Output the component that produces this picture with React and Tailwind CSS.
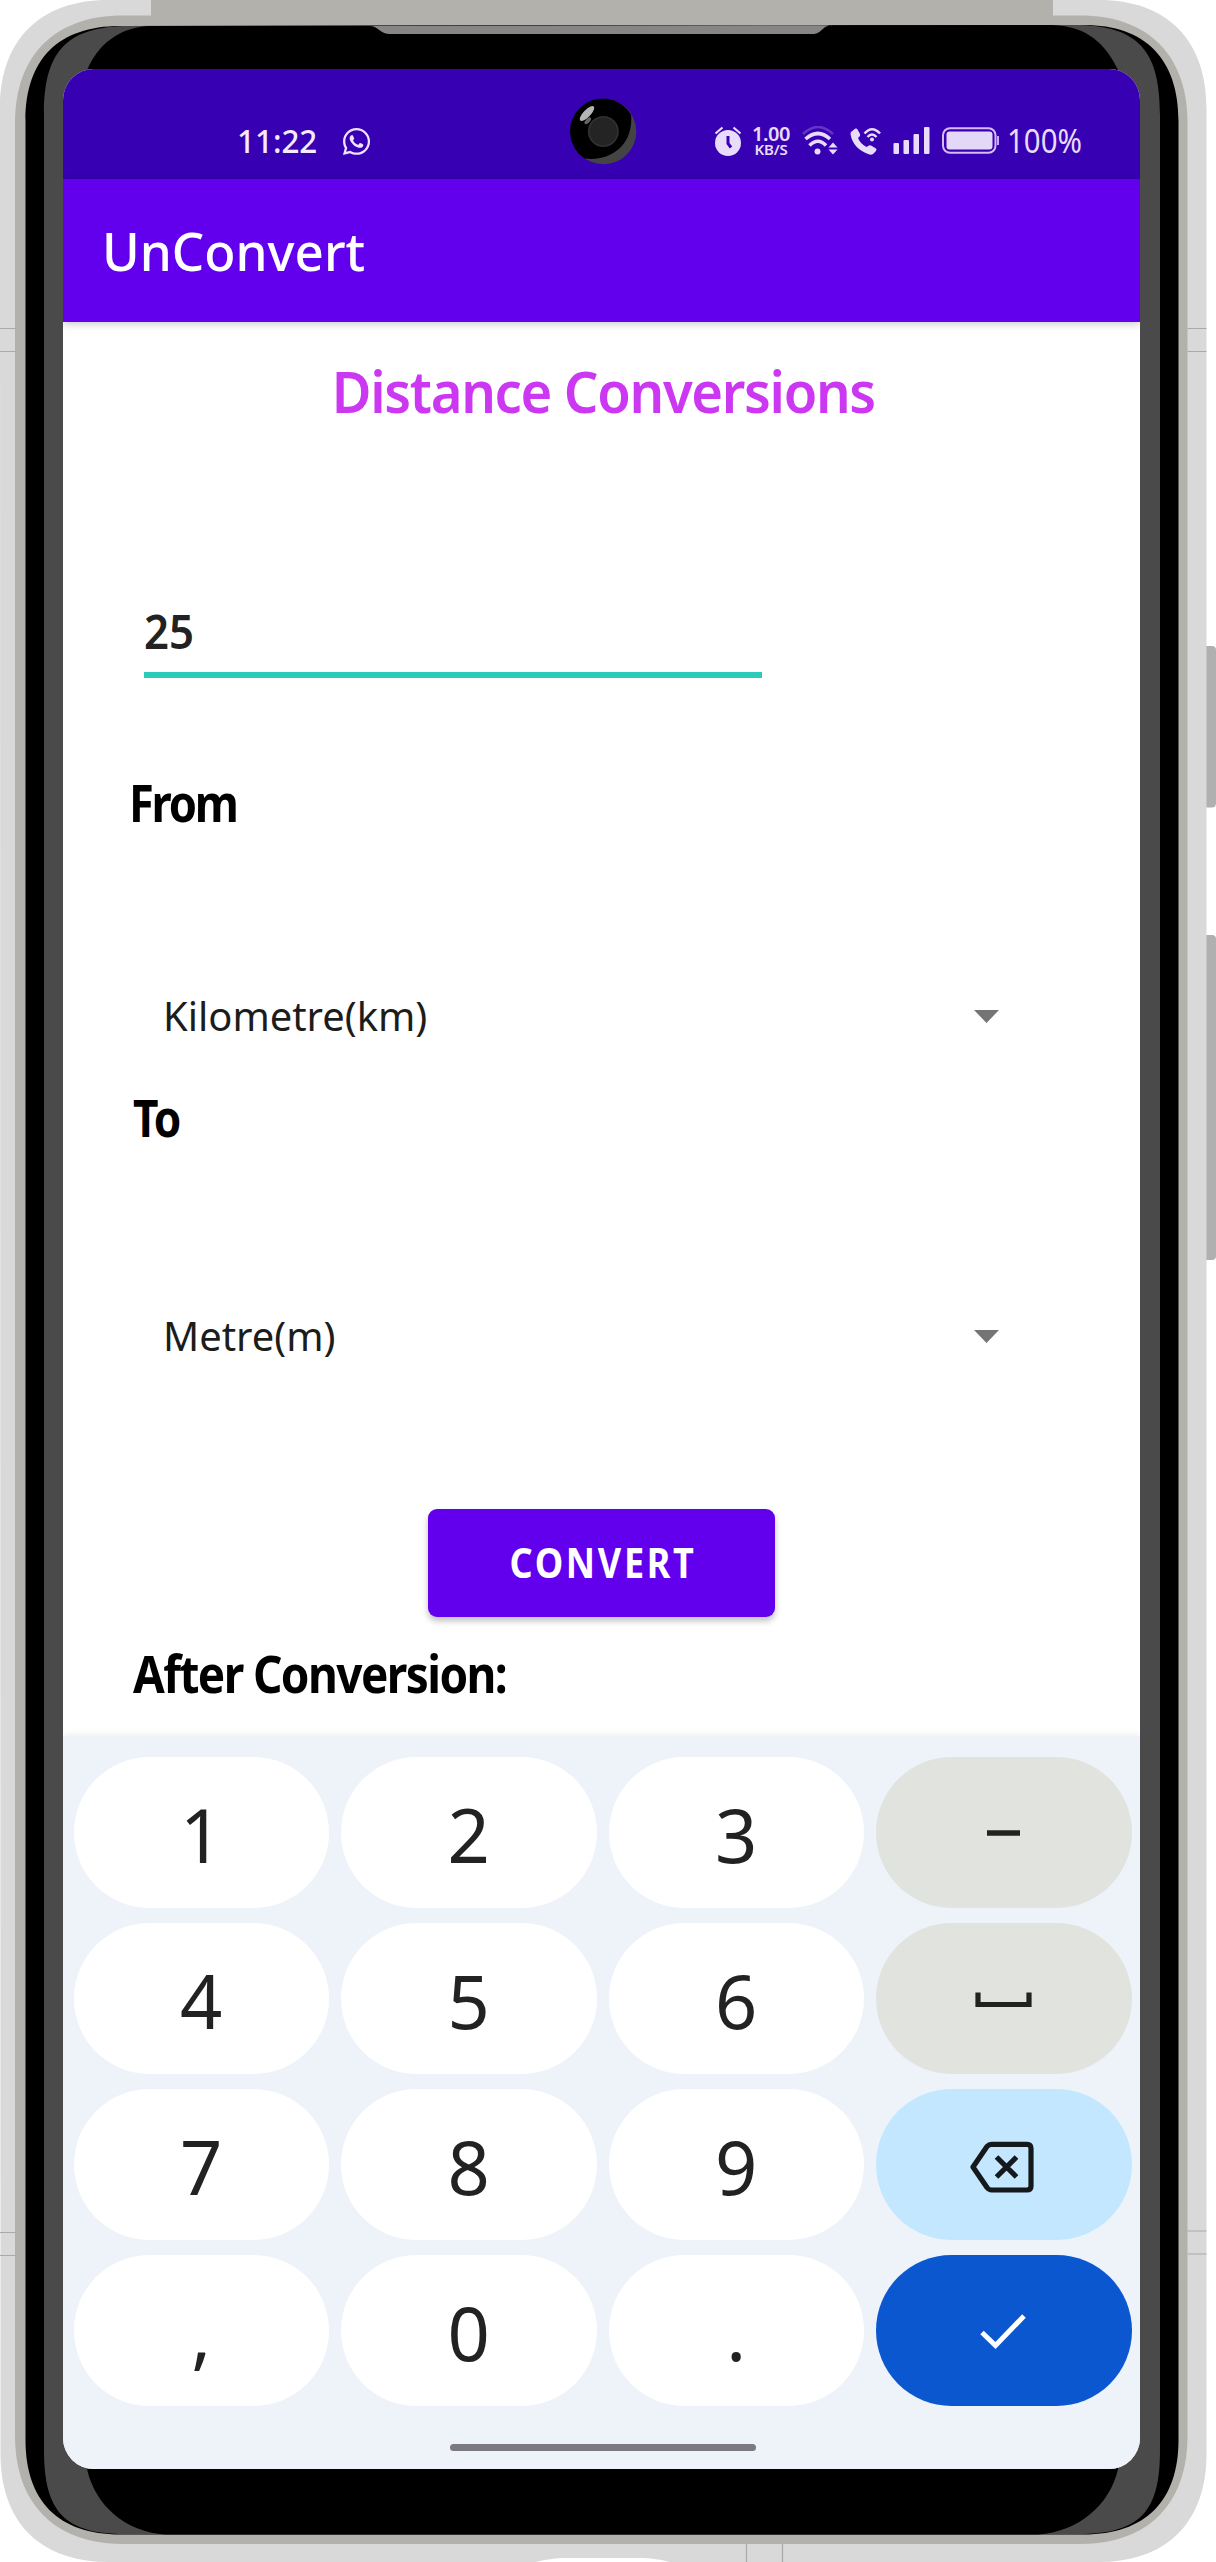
import { FaWhatsapp } from 'react-icons/fa';

function PhoneFrame() {
  return (
    <svg className="absolute inset-0" width="1216" height="2562" viewBox="0 0 1216 2562" aria-hidden="true">
      <g fill="#b0b0b0">
        <path d="M1206 646H1212Q1216 646 1216 650V803Q1216 807.500 1212 807.500H1206Z" />
        <path d="M1206 935H1212Q1216 935 1216 939V1256Q1216 1260 1212 1260H1206Z" />
      </g>
      <path fill="#d9d9d9" d="M0 108C0 40 40 0 108 0H1099C1167 0 1206.500 40 1206.500 108V2454C1206.500 2522 1167 2562 1099 2562H108C40 2562 0.500 2522 0.500 2454Z" />
      <path fill="#b2b1ac" d="M15 123C15 55 55 15.500 123 15.500H1080C1148 15.500 1187.500 55 1187.500 123V2436C1187.500 2504 1148 2544 1080 2544H123C55 2544 15 2504 15 2436Z" />
      <path fill="#b2b1ac" d="M151 0H1053V20H151Z" />
      <path fill="#000" d="M25.500 121C25.500 59 58.500 26 120 26L1084 25C1145.500 25 1178.500 59 1178.500 121V2440C1178.500 2501 1145.500 2534.500 1084 2534.500H120C58.500 2534.500 25.500 2501 25.500 2440Z" />
      <path fill="#4a4a4a" d="M44 115C44 55 63 26 130 26L1075 25C1142 25 1160 55 1160 115V2450C1160 2510 1142 2534 1078 2534H125C63 2534 44 2510 44 2450Z" />
      <path fill="#000" d="M148 26C118 28 98 45 87 70V2469C95 2505 125 2532 165 2534.500H1038C1078 2532 1110 2505 1118 2469V70C1106 45 1088 26 1052 25Z" />
      <path fill="#868686" d="M370 26C378 26 380 34 390 34H813C822 34 822 25 833 25Z" />
      <g stroke="#a9a9a9" strokeWidth="1.200">
        <path d="M0 328.500H16M0 351.500H16M1187.500 328.500H1206.500M1187.500 351.500H1206.500" />
        <path d="M0 2232.500H16M0 2255.500H16M1187.500 2231H1206.500M1187.500 2254H1206.500" />
        <path d="M746.500 2543V2562M782.500 2543V2562" />
      </g>
      <path fill="#fff" d="M536 2562C548 2559 556 2558 565 2558H640C650 2558 658 2559 670 2562Z" />
    </svg>
  );
}

function Camera() {
  return (
    <svg className="absolute left-[570px] top-[98px]" width="67" height="67" viewBox="0 0 67 67" aria-hidden="true">
      <circle cx="33.500" cy="33.500" r="32.800" fill="#444" />
      <path fill="#000" d="M61 16.500A32.800 32.800 0 1 0 14.500 60.500C38 64 64 49 61 16.500Z" />
      <circle cx="33.300" cy="33.500" r="14.600" fill="#242424" stroke="#303030" strokeWidth="1.800" />
      <ellipse cx="17" cy="15.500" rx="9.800" ry="3.600" transform="rotate(-46 17 15.500)" fill="#b5b5b5" />
      <ellipse cx="17.800" cy="22.800" rx="4.200" ry="2" transform="rotate(-46 17.800 22.800)" fill="#666" />
    </svg>
  );
}

function StatusBar() {
  return (
    <div className="flex h-[110px] shrink-0 items-start bg-[#3700b3] pt-[57px] text-[#e8dcfa]">
      <div className="ml-[174px] flex h-[30px] w-[84px] items-center">
        <span className="origin-left scale-x-[0.98] text-[32px] font-medium leading-[30px] text-[#f4ecfe]">11:22</span>
      </div>
      <FaWhatsapp className="ml-[20px]  text-[#f0e2ff]" size={31} />
      <svg className="ml-[342px]" width="28" height="30" viewBox="0 0 28 30">
        <circle cx="14" cy="17" r="13" fill="currentColor" />
        <path d="M1.500 7.500L8.500 1.500M26.500 7.500L19.500 1.500" stroke="currentColor" strokeWidth="2.200" />
        <path d="M14 10V17.500L17 21.500" stroke="#3700b3" strokeWidth="3" fill="none" />
      </svg>
      <div className="ml-[8px] flex h-[30px] w-[42px] flex-col items-center">
        <span className="text-[20px] font-semibold leading-[16px] tracking-[-0.5px]">1.00</span>
        <span className="text-[15px] font-semibold leading-[15px] tracking-[-0.2px]">KB/S</span>
      </div>
      <svg className="ml-[10px]" width="37" height="30" viewBox="0 0 37 30" fill="none" stroke="currentColor">
        <path d="M1 8Q16 -6 31 8" strokeWidth="2.500" opacity="0.25" />
        <path d="M3.500 13Q16 2 28 13" strokeWidth="3.600" />
        <path d="M7.500 19.500Q16 11 24 19.500" strokeWidth="3.600" />
        <circle cx="15.500" cy="25.500" r="3" fill="currentColor" stroke="none" />
        <path d="M26.500 21.500L31 16.500L35.500 21.500ZM26.500 23.500H35.500L31 28.500Z" fill="currentColor" stroke="none" />
      </svg>
      <svg className="ml-[11px]" width="32" height="30" viewBox="0 0 32 30" fill="none" stroke="currentColor">
        <path d="M1 6L5 2.800Q6.500 2 7.500 3.500L10 8Q10.500 9.500 9.500 10.500L8 12Q10.500 18 16.500 21L19 19.500Q20 19 21 19.500L26 22.500Q27 23.500 26 25L23 28Q21.500 29 19.500 28.500Q3 23 0.500 8Q0.500 7 1 6Z" fill="currentColor" stroke="none" />
        <path d="M14.500 7.500Q22 -1 30 7.500M17.500 11Q22 6 26.500 11" strokeWidth="2.500" />
        <circle cx="22" cy="13.500" r="2" fill="currentColor" stroke="none" />
      </svg>
      <svg className="ml-[11px]" width="38" height="30" viewBox="0 0 38 30" fill="currentColor">
        <rect x="0.500" y="17" width="5.500" height="11" rx="1" />
        <rect x="10.500" y="14" width="5.500" height="14" rx="1" />
        <rect x="20.500" y="8" width="5.500" height="20" rx="1" />
        <rect x="31" y="1" width="5.500" height="27" rx="1" />
      </svg>
      <svg className="ml-[11px]" width="59" height="30" viewBox="0 0 59 30">
        <rect x="1" y="2.200" width="52.500" height="24.600" rx="7" fill="none" stroke="#d9baf7" strokeWidth="2" />
        <rect x="4.500" y="5.500" width="46" height="18" rx="3" fill="#e3d8f7" />
        <path d="M56 10V19" stroke="#c9a8ef" strokeWidth="2" />
      </svg>
      <div className="ml-[6px] flex h-[30px] items-center">
        <span className="origin-left scale-x-[0.92] text-[32px] leading-[30px]">100%</span>
      </div>
    </div>
  );
}

function Label({ className, children }) {
  return (
    <div className={`flex h-[72px] origin-left items-center ${className}`}>
      <span className="whitespace-nowrap text-[52px] font-bold leading-[72px] text-black">{children}</span>
    </div>
  );
}

function Spinner({ className, children }) {
  return (
    <div className={`ml-[100px] flex h-20 w-[836px] items-center justify-between ${className}`}>
      <span className="origin-left scale-x-[0.985] text-[40.5px] leading-[80px] text-[#1c1c1c]">{children}</span>
      <svg width="25" height="13" viewBox="0 0 25 13">
        <path d="M0 0H25L12.500 13Z" fill="#747474" />
      </svg>
    </div>
  );
}

const icons = {
  minus: (
    <svg width="34" height="6" viewBox="0 0 34 6">
      <path d="M0 0.300H33V5.700H0Z" fill="#20231f" />
    </svg>
  ),
  space: (
    <svg className="mt-[3px]" width="57" height="16" viewBox="0 0 57 16">
      <path d="M3 0.500V12.500H54V0.500" fill="none" stroke="#20231f" strokeWidth="5.200" />
    </svg>
  ),
  backspace: (
    <svg className="mr-[3px] mt-[4px]" width="64" height="52" viewBox="0 0 64 52" fill="none" stroke="#15191c" strokeWidth="5.200" strokeLinejoin="round">
      <path d="M3 26L17 5.500Q19 3.300 21.500 3.300H57Q61 3.300 61 7.300V45Q61 49 57 49H21.500Q19 49 17 46.500Z" />
      <path d="M26.500 16L46.500 36M46.500 16L26.500 36" />
    </svg>
  ),
  check: (
    <svg className="mr-px" width="46" height="36" viewBox="0 0 46 36">
      <path d="M2 19.500L15.500 32.500L44 3" fill="none" stroke="#fff" strokeWidth="5" />
    </svg>
  ),
};

const keys = ['1', '2', '3', 'minus', '4', '5', '6', 'space', '7', '8', '9', 'backspace', ',', '0', '.', 'check'];

const keyColors = {
  minus: 'bg-[#e1e3df]',
  space: 'bg-[#e1e3df]',
  backspace: 'bg-[#c3e7ff]',
  check: 'bg-[#0b57d0]',
};

function Keypad() {
  return (
    <div className="flex h-[733px] shrink-0 flex-col items-center bg-[#eef3fa] pt-[21px] shadow-[0_-2px_6px_rgba(0,0,0,0.06)]">
      <div className="ml-[2px] grid grid-cols-4 gap-x-[12px] gap-y-[15px]">
        {keys.map((k) => (
          <button
            key={k}
            className={`flex h-[151px] w-[255.5px] items-center justify-center rounded-[76px] text-[74px] leading-[151px] text-[#222] ${keyColors[k] || 'bg-white pt-[3px]'}`}
          >
            {icons[k] || k}
          </button>
        ))}
      </div>
      <div className="ml-[2px] mt-[38px] h-[7px] w-[306px] rounded-full bg-[#7b7a80]" />
    </div>
  );
}

export default function App() {
  return (
    <div className="relative h-[2562px] w-[1216px] overflow-hidden bg-white font-['Noto_Sans','Open_Sans',sans-serif]">
      <PhoneFrame />
      <main className="relative ml-[63px] mt-[69px] flex h-[2400px] w-[1077px] flex-col overflow-hidden rounded-[31px] bg-white">
        <StatusBar />
        <header className="z-10 flex h-[143px] shrink-0 items-center bg-[#6200ee] pl-[39px] shadow-[0_2px_8px_rgba(0,0,0,0.22)]">
          <h1 className="origin-left scale-x-[0.965] text-[53px] font-medium leading-[80px] text-white">UnConvert</h1>
        </header>
        <section className="flex grow flex-col">
          <div className="flex h-[140px] items-center justify-center pb-[2px] pl-[3px]">
            <h2 className="scale-x-[0.955] whitespace-nowrap text-[57px] font-[580] leading-[80px] tracking-[-1.4px] text-[#cc38f2]">Distance Conversions</h2>
          </div>
          <div className="ml-[81px] mt-[126px] flex h-[90px] w-[618px] items-center border-b-[6px] border-[#2bcbba] pt-px">
            <span className="origin-left scale-x-[0.95] text-[46px] font-[560] leading-[84px] text-[#222]">25</span>
          </div>
          <Label className="ml-[66px] mt-[88px] scale-x-[0.87] tracking-[-2.6px]">From</Label>
          <Spinner className="mt-[138px]">Kilometre(km)</Spinner>
          <Label className="ml-[70px] mt-[25px] scale-x-[0.85] tracking-[-2px]">To</Label>
          <Spinner className="mt-[143px]">Metre(m)</Spinner>
          <button className="ml-[364.5px] mt-[133px] flex h-[108px] w-[347.5px] items-center justify-center rounded-[9px] bg-[#6200ee] pl-[4px] shadow-[0_4px_6px_rgba(0,0,0,0.25)]">
            <span className="scale-x-[0.89] text-[40.5px] font-bold leading-[60px] tracking-[3px] text-white">CONVERT</span>
          </button>
          <Label className="ml-[70px] mt-[20px] scale-x-[0.884] tracking-[-1.8px]">After Conversion:</Label>
        </section>
        <Keypad />
      </main>
      <Camera />
    </div>
  );
}
